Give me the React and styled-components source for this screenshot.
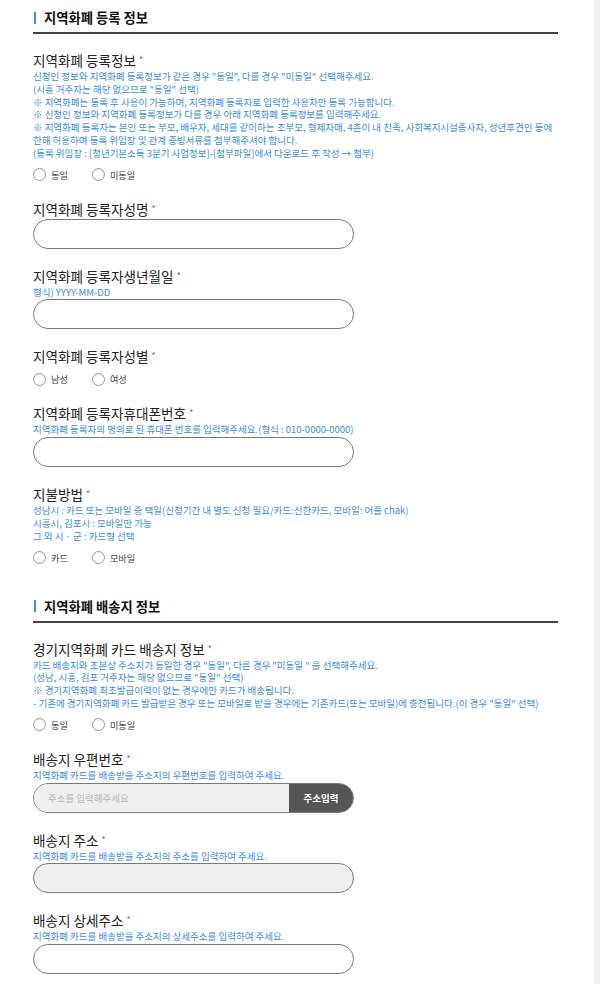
import * as React from "react";
import styled, { createGlobalStyle } from "styled-components";

const GlobalStyle = createGlobalStyle`
  * { box-sizing: border-box; }
  body {
    margin: 0;
    background: #fff;
    font-family: "Noto Sans CJK KR", "Noto Sans", sans-serif;
  }
`;

const Screen = styled.div`
  display: flex;
  min-height: 984px;
`;

const Page = styled.main`
  flex: 1;
  padding: 10px 36px 0 33px;
`;

const ScrollTrack = styled.div`
  width: 6px;
  background: #f0f0f0;
`;

const Section = styled.section`
  & + & {
    margin-top: 34px;
  }
`;

const SectionHeader = styled.h2`
  display: flex;
  align-items: center;
  gap: 8px;
  margin: 0 0 18px;
  padding-bottom: 7px;
  border-bottom: 2px solid #444;
  font-size: 13.3px;
  line-height: 15px;
  font-weight: 700;
  color: #111;

  &::before {
    content: "";
    width: 2px;
    height: 12px;
    margin-left: 1px;
    background: #3a8fd9;
  }
`;

const Field = styled.div`
  & + & {
    margin-top: 19px;
  }
`;

const Label = styled.div`
  font-size: 13.6px;
  line-height: 15px;
  color: #222;
`;

const Required = styled.span`
  color: #e8383d;
  font-size: 9px;
  margin-left: 3px;
  vertical-align: 3px;
`;

const HintBlock = styled.div`
  margin-top: 2px;
`;

const Hint = styled.div`
  font-size: 9.5px;
  line-height: 12.8px;
  color: #3b8de0;
  white-space: nowrap;
`;

const RadioRow = styled.div`
  display: flex;
  gap: 24px;
  height: 14px;
  margin-top: 8px;
`;

const RadioOption = styled.label`
  display: flex;
  align-items: center;
  gap: 5px;
  font-size: 9.2px;
  color: #444;
`;

const RadioCircle = styled.span`
  width: 13px;
  height: 13px;
  border-radius: 50%;
  border: 1px solid #9a9a9a;
  background: #fff;
  box-shadow: inset 0 1px 1px rgba(0, 0, 0, 0.08);
`;

const TextInput = styled.input`
  display: block;
  width: 321px;
  height: 30px;
  margin-top: ${(p) => (p.$afterHint ? "1px" : "2px")};
  padding: 0 14px;
  border: 1px solid #7a7a7a;
  border-radius: 15px;
  background: ${(p) => (p.$readOnly ? "#efefef" : "#fff")};
  font-family: inherit;
  font-size: 9.5px;
  outline: none;
`;

const AddressGroup = styled.div`
  display: flex;
  width: 321px;
  height: 30px;
  margin-top: 1px;
  border: 1px solid #7a7a7a;
  border-radius: 15px;
  overflow: hidden;
`;

const AddressInput = styled.input`
  flex: 1;
  min-width: 0;
  padding: 0 14px;
  border: none;
  background: #efefef;
  font-family: inherit;
  font-size: 9.5px;
  outline: none;

  &::placeholder {
    color: #b8b8b8;
  }
`;

const AddressButton = styled.button`
  width: 64px;
  border: none;
  background: #555;
  color: #fff;
  font-family: inherit;
  font-size: 9.5px;
  font-weight: 700;
`;

function Radios({ options }) {
  return (
    <RadioRow>
      {options.map((o) => (
        <RadioOption key={o}>
          <RadioCircle />
          {o}
        </RadioOption>
      ))}
    </RadioRow>
  );
}

function FieldLabel({ children }) {
  return (
    <Label>
      {children}
      <Required>*</Required>
    </Label>
  );
}

function Hints({ lines }) {
  return (
    <HintBlock>
      {lines.map((l, i) => (
        <Hint key={i}>{l}</Hint>
      ))}
    </HintBlock>
  );
}

export default function App() {
  return (
    <>
      <GlobalStyle />
      <Screen>
        <Page>
          <Section>
            <SectionHeader>지역화폐 등록 정보</SectionHeader>

            <Field>
              <FieldLabel>지역화폐 등록정보</FieldLabel>
              <Hints
                lines={[
                  '신청인 정보와 지역화폐 등록정보가 같은 경우 "동일", 다를 경우 "미동일" 선택해주세요.',
                  '(시흥 거주자는 해당 없으므로 "동일" 선택)',
                  "※ 지역화폐는 등록 후 사용이 가능하며, 지역화폐 등록자로 입력한 사용자만 등록 가능합니다.",
                  "※ 신청인 정보와 지역화폐 등록정보가 다를 경우 아래 지역화폐 등록정보를 입력해주세요.",
                  "※ 지역화폐 등록자는 본인 또는 부모, 배우자, 세대를 같이하는 조부모, 형제자매, 4촌이 내 친족, 사회복지시설종사자, 성년후견인 등에",
                  "한해 허용하며 등록 위임장 및 관계 증빙서류를 첨부해주셔야 합니다.",
                  "(등록 위임장 : [청년기본소득 3분기 사업정보]-[첨부파일]에서 다운로드 후 작성 → 첨부)",
                ]}
              />
              <Radios options={["동일", "미동일"]} />
            </Field>

            <Field>
              <FieldLabel>지역화폐 등록자성명</FieldLabel>
              <TextInput type="text" />
            </Field>

            <Field>
              <FieldLabel>지역화폐 등록자생년월일</FieldLabel>
              <Hints lines={["형식) YYYY-MM-DD"]} />
              <TextInput type="text" $afterHint />
            </Field>

            <Field>
              <FieldLabel>지역화폐 등록자성별</FieldLabel>
              <Radios options={["남성", "여성"]} />
            </Field>

            <Field>
              <FieldLabel>지역화폐 등록자휴대폰번호</FieldLabel>
              <Hints
                lines={["지역화폐 등록자의 명의로 된 휴대폰 번호를 입력해주세요.(형식 : 010-0000-0000)"]}
              />
              <TextInput type="text" $afterHint />
            </Field>

            <Field>
              <FieldLabel>지불방법</FieldLabel>
              <Hints
                lines={[
                  "성남시 : 카드 또는 모바일 중 택일(신청기간 내 별도 신청 필요/카드:신한카드, 모바일: 어플 chak)",
                  "시흥시, 김포시 : 모바일만 가능",
                  "그 외 시 · 군 : 카드형 선택",
                ]}
              />
              <Radios options={["카드", "모바일"]} />
            </Field>
          </Section>

          <Section>
            <SectionHeader>지역화폐 배송지 정보</SectionHeader>

            <Field>
              <FieldLabel>경기지역화폐 카드 배송지 정보</FieldLabel>
              <Hints
                lines={[
                  '카드 배송지와 초본상 주소지가 동일한 경우 "동일", 다른 경우 "미동일 " 을 선택해주세요.',
                  '(성남, 시흥, 김포 거주자는 해당 없으므로 "동일" 선택)',
                  "※ 경기지역화폐 최초발급이력이 없는 경우에만 카드가 배송됩니다.",
                  '- 기존에 경기지역화폐 카드 발급받은 경우 또는 모바일로 받을 경우에는 기존카드(또는 모바일)에 충전됩니다.(이 경우 "동일" 선택)',
                ]}
              />
              <Radios options={["동일", "미동일"]} />
            </Field>

            <Field>
              <FieldLabel>배송지 우편번호</FieldLabel>
              <Hints lines={["지역화폐 카드를 배송받을 주소지의 우편번호를 입력하여 주세요."]} />
              <AddressGroup>
                <AddressInput type="text" placeholder="주소를 입력해주세요" readOnly />
                <AddressButton type="button">주소입력</AddressButton>
              </AddressGroup>
            </Field>

            <Field>
              <FieldLabel>배송지 주소</FieldLabel>
              <Hints lines={["지역화폐 카드를 배송받을 주소지의 주소를 입력하여 주세요."]} />
              <TextInput type="text" readOnly $readOnly $afterHint />
            </Field>

            <Field>
              <FieldLabel>배송지 상세주소</FieldLabel>
              <Hints lines={["지역화폐 카드를 배송받을 주소지의 상세주소를 입력하여 주세요."]} />
              <TextInput type="text" $afterHint />
            </Field>
          </Section>
        </Page>
        <ScrollTrack />
      </Screen>
    </>
  );
}
